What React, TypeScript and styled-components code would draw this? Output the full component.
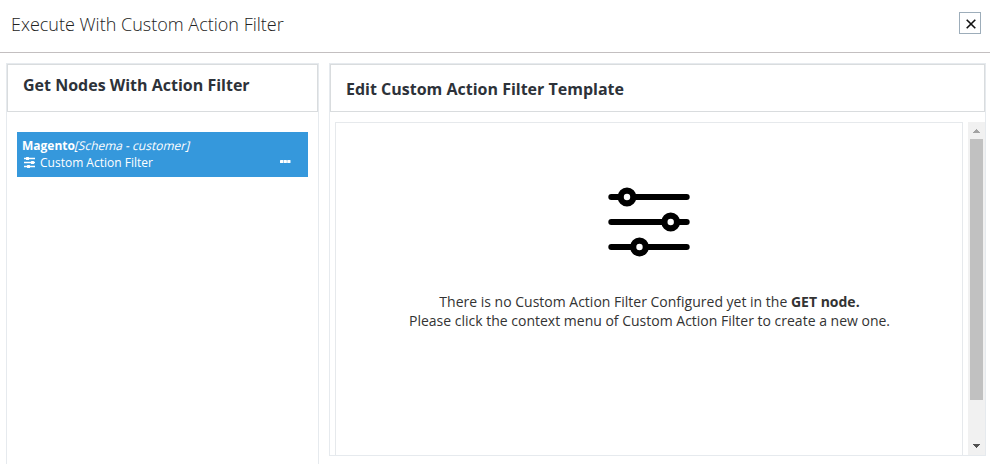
import React from "react";
import styled, { createGlobalStyle } from "styled-components";

const GlobalStyle = createGlobalStyle`
  *, *::before, *::after { box-sizing: border-box; }
  html, body { margin: 0; background: #fff; overflow: hidden; }
  body { font-family: "Open Sans", sans-serif; color: #333; }
`;

const Dialog = styled.div`
  width: 990px;
  height: 464px;
  overflow: hidden;
  background: #fff;
`;

const DialogHeader = styled.header`
  display: flex;
  align-items: flex-start;
  justify-content: space-between;
  height: 53px;
  padding: 12px 9px 0 11px;
  border-bottom: 1px solid #c3bfc0;
`;

const DialogTitle = styled.h1`
  margin: 0;
  font-size: 18px;
  font-weight: 300;
  line-height: 25px;
  color: #222;
  white-space: nowrap;
`;

const CloseButton = styled.button`
  display: flex;
  align-items: center;
  justify-content: center;
  width: 22px;
  height: 22px;
  padding: 1px 0 0 1px;
  border: 1px solid #9dadba;
  background: #fff;
`;

const Columns = styled.main`
  display: flex;
  align-items: flex-start;
  gap: 10px;
  padding: 10px 4px 0 6px;
`;

const Panel = styled.section<{ $width: number; $height: number }>`
  flex: none;
  width: ${(p) => p.$width}px;
  height: ${(p) => p.$height}px;
  border: 1px solid #e6eaee;
`;

const PanelHeading = styled.h2<{ $offset: number }>`
  height: 48px;
  margin: 0;
  padding: ${(p) => p.$offset}px 15px 0;
  border: 1px solid #d9dcde;
  font-size: 16px;
  font-weight: 700;
  line-height: 22px;
  color: #2d3239;
  white-space: nowrap;
`;

const NodeCard = styled.div`
  width: 291px;
  height: 45px;
  margin: 20px 0 0 10px;
  padding: 5px 17px 0 5px;
  background: #3598dc;
  color: #fff;
  font-size: 12px;
  line-height: 17px;
  white-space: nowrap;
`;

const SchemaName = styled.span`
  display: inline-block;
  transform: skewX(-14deg);
`;

const NodeAction = styled.div`
  display: flex;
  align-items: center;
  height: 17px;
`;

const ActionLabel = styled.span`
  flex: 1;
  margin-left: 4px;
`;

const EditorArea = styled.div`
  display: flex;
  justify-content: space-between;
  height: 333px;
  margin-top: 10px;
  padding-left: 5px;
`;

const EmptyState = styled.div`
  display: flex;
  flex-direction: column;
  align-items: center;
  width: 628px;
  padding-top: 64px;
  border: 1px solid #e6e9ec;
  border-bottom: 0;
`;

const EmptyMessage = styled.p`
  margin: 35px 0 0 1px;
  font-size: 14px;
  line-height: 19px;
  text-align: center;
  white-space: nowrap;
`;

const ScrollTrack = styled.div`
  display: flex;
  flex-direction: column;
  align-items: center;
  width: 17px;
  background: #f1f1f1;
`;

const ScrollArrow = styled.div<{ $bottom?: boolean }>`
  display: flex;
  align-items: center;
  justify-content: center;
  width: 17px;
  height: 17px;
  padding-bottom: ${(p) => (p.$bottom ? 2 : 0)}px;
`;

const ScrollThumb = styled.div`
  width: 13px;
  height: 261px;
  margin-bottom: auto;
  background: #c1c1c1;
`;

const CloseIcon = () => (
  <svg width="10" height="10" viewBox="0 0 10 10">
    <path d="M.7.7l8.6 8.6M9.3.7L.7 9.3" stroke="#111" strokeWidth="1.6" />
  </svg>
);

const SlidersIcon = () => (
  <svg width="14" height="11" viewBox="0 0 14 11" stroke="#fff">
    <path d="M2 1.5h11M2 5.5h11M2 9.5h11" strokeWidth="1.3" />
    <g fill="#fff" stroke="none">
      <rect x="4" y="0" width="3" height="3" rx=".5" />
      <rect x="9" y="4" width="3" height="3" rx=".5" />
      <rect x="5" y="8" width="3" height="3" rx=".5" />
    </g>
  </svg>
);

const MoreIcon = () => (
  <svg width="11" height="5" viewBox="0 0 11 5" fill="#fff">
    <rect width="3.4" height="3" rx=".6" />
    <rect x="3.7" width="3.2" height="3" rx=".6" />
    <rect x="7.2" width="3.3" height="3" rx=".6" />
  </svg>
);

const LargeSlidersIcon = () => (
  <svg width="82" height="70" viewBox="0 0 82 70" stroke="#000" fill="#fff">
    <path d="M3.3 10h75.4M3.3 35h75.4M3.3 60h75.4" strokeWidth="6" strokeLinecap="round" />
    <g strokeWidth="6.2">
      <circle cx="19" cy="10" r="6.3" />
      <circle cx="62.7" cy="35" r="6.3" />
      <circle cx="31.5" cy="60" r="6.3" />
    </g>
  </svg>
);

const ArrowIcon = ({ down = false }: { down?: boolean }) => (
  <svg width="7" height="4" viewBox="0 0 7 4" shapeRendering="crispEdges">
    {down ? (
      <path d="M0 0h7v1H6v1H5v1H4v1H3V3H2V2H1V1H0z" fill="#505050" />
    ) : (
      <path d="M0 4h7V3H6V2H5V1H4V0H3v1H2v1H1v1H0z" fill="#a3a3a3" />
    )}
  </svg>
);

export default function App() {
  return (
    <>
      <GlobalStyle />
      <Dialog>
        <DialogHeader>
          <DialogTitle>Execute With Custom Action Filter</DialogTitle>
          <CloseButton aria-label="Close">
            <CloseIcon />
          </CloseButton>
        </DialogHeader>
        <Columns>
          <Panel $width={313} $height={420}>
            <PanelHeading $offset={9}>Get Nodes With Action Filter</PanelHeading>
            <NodeCard>
              <div>
                <b>Magento</b>
                <SchemaName>[Schema - customer]</SchemaName>
              </div>
              <NodeAction>
                <SlidersIcon />
                <ActionLabel>Custom Action Filter</ActionLabel>
                <MoreIcon />
              </NodeAction>
            </NodeCard>
          </Panel>
          <Panel $width={657} $height={393}>
            <PanelHeading $offset={13}>Edit Custom Action Filter Template</PanelHeading>
            <EditorArea>
              <EmptyState>
                <LargeSlidersIcon />
                <EmptyMessage>
                  There is no Custom Action Filter Configured yet in the <b>GET node.</b>
                  <br />
                  Please click the context menu of Custom Action Filter to create a new one.
                </EmptyMessage>
              </EmptyState>
              <ScrollTrack>
                <ScrollArrow>
                  <ArrowIcon />
                </ScrollArrow>
                <ScrollThumb />
                <ScrollArrow $bottom>
                  <ArrowIcon down />
                </ScrollArrow>
              </ScrollTrack>
            </EditorArea>
          </Panel>
        </Columns>
      </Dialog>
    </>
  );
}
